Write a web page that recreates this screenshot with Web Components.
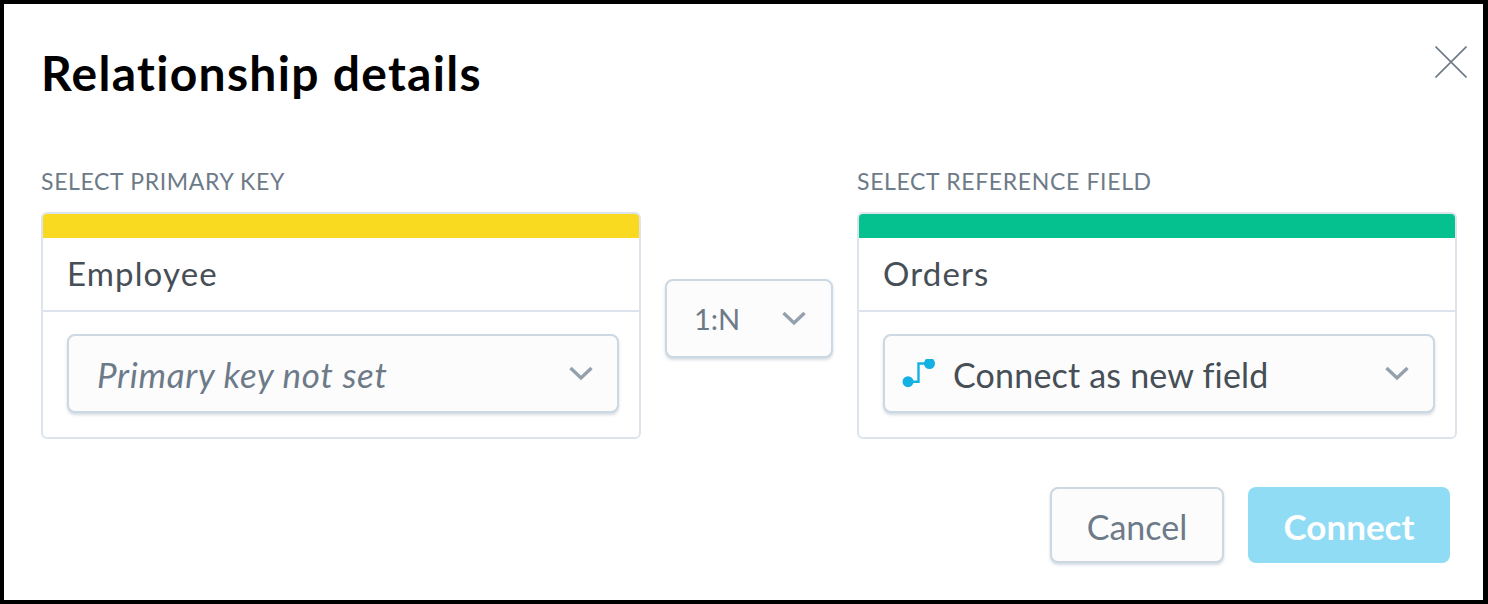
<!DOCTYPE html>
<html>
<head>
<meta charset="utf-8">
<title>Relationship details</title>
<style>
  html, body { margin: 0; padding: 0; background: #000; }
  body { font-family: "Lato", "Liberation Sans", sans-serif; }
</style>
</head>
<body>
<template id="chevron">
  <svg width="26" height="16" viewBox="0 0 26 16" fill="none"><path d="M2.5 3 L13 13 L23.5 3" stroke="#94a1ad" stroke-width="3.4"/></svg>
</template>

<relationship-dialog heading="Relationship details">
  <dataset-card slot="left" label="SELECT PRIMARY KEY" name="Employee" color="#f9da21">
    <drop-down wide italic text="Primary key not set"></drop-down>
  </dataset-card>
  <drop-down slot="middle" small text="1:N"></drop-down>
  <dataset-card slot="right" label="SELECT REFERENCE FIELD" name="Orders" color="#05c18f">
    <drop-down wide text="Connect as new field">
      <svg slot="icon" width="34" height="30" viewBox="0 0 34 30" fill="none">
        <path d="M6 22.7 H16.5 V4.5 H27" stroke="#14b2e2" stroke-width="2.4"/>
        <circle cx="6" cy="22.7" r="5.5" fill="#14b2e2"/>
        <circle cx="27.5" cy="4.5" r="5.5" fill="#14b2e2"/>
      </svg>
    </drop-down>
  </dataset-card>
  <action-button slot="actions" text="Cancel"></action-button>
  <action-button slot="actions" primary text="Connect"></action-button>
</relationship-dialog>

<script>
class RelationshipDialog extends HTMLElement {
  constructor() {
    super();
    this.attachShadow({ mode: "open" });
    this.shadowRoot.innerHTML = `
    <style>
      :host {
        display: block;
        box-sizing: border-box;
        width: 1488px;
        height: 604px;
        border-style: solid;
        border-color: #000;
        border-width: 4px 5px 4px 4px;
        background: #fff;
        padding: 0 26px 0 37px;
        position: relative;
      }
      h1 {
        margin: 0;
        padding: 38px 0 0 0;
        height: 109px;
        box-sizing: border-box;
        font-size: 48px;
        line-height: 62px;
        letter-spacing: 1.3px;
        font-weight: 700;
        color: #000;
      }
      .columns {
        display: grid;
        grid-template-columns: 600px 1fr 600px;
        margin-top: 54px;
      }
      .middle {
        padding: 112px 0 0 24px;
      }
      .actions {
        display: flex;
        justify-content: flex-end;
        gap: 24px;
        margin: 48px 7px 0 0;
      }
      .close {
        position: absolute;
        top: 42px;
        right: 16px;
        width: 32px;
        height: 32px;
      }
    </style>
    <h1></h1>
    <svg class="close" viewBox="0 0 32 32" fill="none"><path d="M0.5 0.5 L31.5 31.5 M31.5 0.5 L0.5 31.5" stroke="#6d7a88" stroke-width="1.6"/></svg>
    <div class="columns">
      <slot name="left"></slot>
      <div class="middle"><slot name="middle"></slot></div>
      <slot name="right"></slot>
    </div>
    <div class="actions"><slot name="actions"></slot></div>
    `;
  }

  connectedCallback() {
    this.shadowRoot.querySelector("h1").textContent = this.getAttribute("heading");
  }
}

class DatasetCard extends HTMLElement {
  constructor() {
    super();
    this.attachShadow({ mode: "open" });
    this.shadowRoot.innerHTML = `
    <style>
      :host { display: block; }
      .label {
        font-size: 23px;
        line-height: 28px;
        letter-spacing: .65px;
        color: #6d7a88;
        height: 28px;
        margin-bottom: 17px;
      }
      .card {
        box-sizing: border-box;
        height: 227px;
        border: 2px solid #dee4ee;
        border-radius: 6px;
        overflow: hidden;
      }
      .band { height: 24px; }
      .name {
        box-sizing: border-box;
        height: 74px;
        padding: 0 24px;
        border-bottom: 2px solid #dee4ee;
        font-size: 33px;
        letter-spacing: 1.15px;
        line-height: 70px;
        color: #464e56;
      }
      .body { padding: 22px 20px 0 24px; }
    </style>
    <div class="label"></div>
    <div class="card">
      <div class="band"></div>
      <div class="name"></div>
      <div class="body"><slot></slot></div>
    </div>
    `;
  }

  connectedCallback() {
    this.shadowRoot.querySelector(".label").textContent = this.getAttribute("label");
    this.shadowRoot.querySelector(".name").textContent = this.getAttribute("name");
    this.shadowRoot.querySelector(".band").style.background = this.getAttribute("color");
  }
}

class DropDown extends HTMLElement {
  constructor() {
    super();
    this.attachShadow({ mode: "open" });
    this.shadowRoot.innerHTML = `
    <style>
      :host {
        display: flex;
        align-items: center;
        box-sizing: border-box;
        height: 79px;
        padding: 0 23px 0 28px;
        border: 2px solid #ccd8e2;
        border-radius: 8px;
        background: #fcfcfd;
        box-shadow: 0 2px 3px rgba(176, 190, 204, .55);
        font-size: 34px;
        letter-spacing: .2px;
        color: #464e56;
      }
      :host([italic]) {
        color: #6d7a88;
        font-style: italic;
        font-size: 35px;
        letter-spacing: .7px;
      }
      :host([small]) {
        width: 168px;
        height: 79px;
        padding: 0 24px 0 27px;
        color: #6d7a88;
        font-size: 29px;
        letter-spacing: 0;
      }
      :host(:not([italic]):not([small])) { padding-left: 17px; }
      :host(:not([italic]):not([small])) .text { padding-top: 2px; }
      .text { flex: 1; }
      ::slotted(svg) { margin-right: 17px; }
      .arrow { display: flex; margin-top: -1px; }
    </style>
    <slot name="icon"></slot>
    <span class="text"></span>
    <span class="arrow"></span>
    `;
    this.shadowRoot.querySelector(".arrow").appendChild(
      document.getElementById("chevron").content.cloneNode(true)
    );
  }

  connectedCallback() {
    this.shadowRoot.querySelector(".text").textContent = this.getAttribute("text");
  }
}

class ActionButton extends HTMLElement {
  constructor() {
    super();
    this.attachShadow({ mode: "open" });
    this.shadowRoot.innerHTML = `
    <style>
      :host {
        display: flex;
        align-items: center;
        justify-content: center;
        box-sizing: border-box;
        width: 174px;
        height: 76px;
        padding-top: 2px;
        border: 2px solid #ccd8e2;
        border-radius: 8px;
        background: #fcfcfd;
        box-shadow: 0 2px 3px rgba(176, 190, 204, .55);
        font-size: 34px;
        color: #6d7a88;
      }
      :host([primary]) {
        width: 202px;
        border: none;
        box-shadow: none;
        background: #90dcf5;
        color: #fff;
        font-size: 35px;
        font-weight: 700;
      }
    </style>
    <span></span>
    `;
  }

  connectedCallback() {
    this.shadowRoot.querySelector("span").textContent = this.getAttribute("text");
  }
}

customElements.define("relationship-dialog", RelationshipDialog);
customElements.define("dataset-card", DatasetCard);
customElements.define("drop-down", DropDown);
customElements.define("action-button", ActionButton);
</script>
</body>
</html>
